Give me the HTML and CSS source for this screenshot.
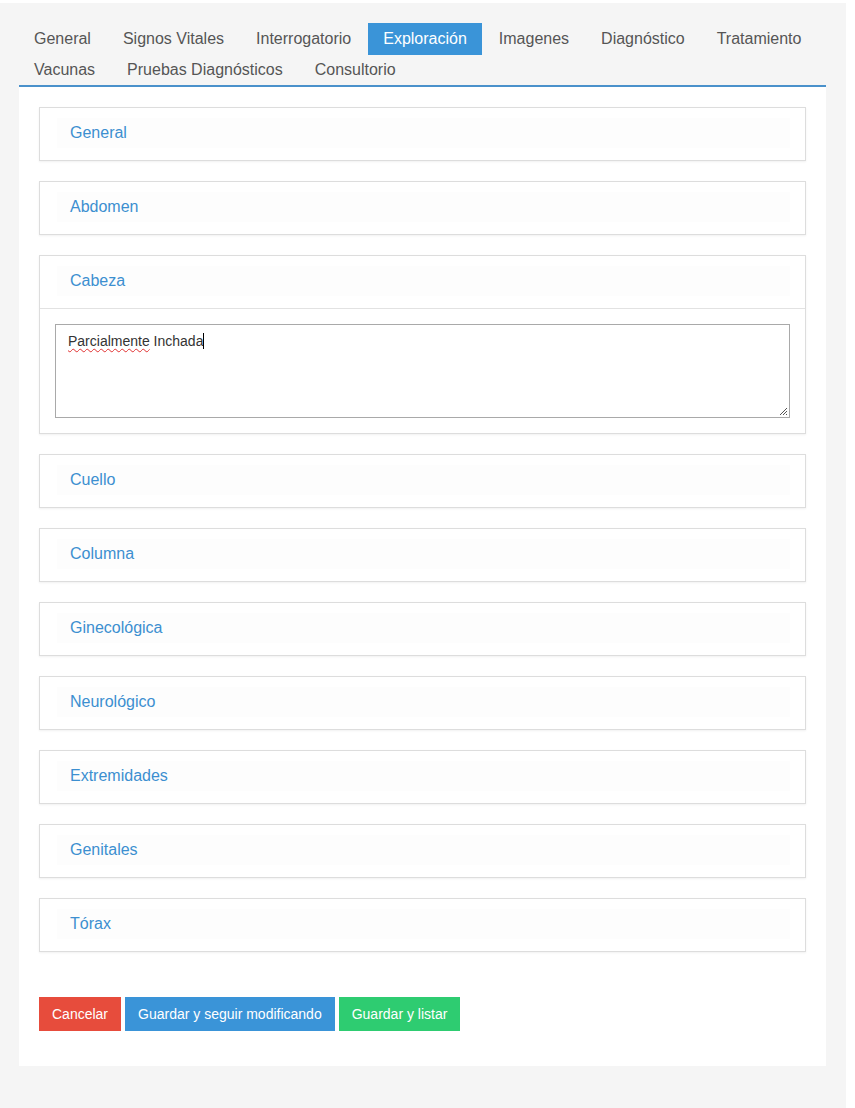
FILE: index.html
```html
<!DOCTYPE html>
<html lang="es">
<head>
<meta charset="utf-8">
<title>Exploración</title>
<link rel="stylesheet" href="styles.css">
</head>
<body>
<div class="page">
  <div class="container">
    <ul class="tabs">
      <li><a class="tab">General</a></li>
      <li><a class="tab">Signos Vitales</a></li>
      <li><a class="tab">Interrogatorio</a></li>
      <li><a class="tab active">Exploración</a></li>
      <li><a class="tab">Imagenes</a></li>
      <li><a class="tab">Diagnóstico</a></li>
      <li><a class="tab">Tratamiento</a></li>
      <li><a class="tab">Vacunas</a></li>
      <li><a class="tab">Pruebas Diagnósticos</a></li>
      <li><a class="tab">Consultorio</a></li>
    </ul>
    <div class="content">
      <div class="item"><div class="item-head"><span class="item-link">General</span></div></div>
      <div class="item"><div class="item-head"><span class="item-link">Abdomen</span></div></div>
      <div class="item">
        <div class="item-head open"><span class="item-link">Cabeza</span></div>
        <div class="item-body">
          <div class="textarea"><span class="spell">Parcialmente</span> Inchada<span class="caret"></span>
            <svg class="grip" width="9" height="9" viewBox="0 0 9 9"><path d="M8 1 L1 8 M8 4 L4 8 M8 7 L7 8" stroke="#555" stroke-width="1"/></svg>
          </div>
        </div>
      </div>
      <div class="item"><div class="item-head"><span class="item-link">Cuello</span></div></div>
      <div class="item"><div class="item-head"><span class="item-link">Columna</span></div></div>
      <div class="item"><div class="item-head"><span class="item-link">Ginecológica</span></div></div>
      <div class="item"><div class="item-head"><span class="item-link">Neurológico</span></div></div>
      <div class="item"><div class="item-head"><span class="item-link">Extremidades</span></div></div>
      <div class="item"><div class="item-head"><span class="item-link">Genitales</span></div></div>
      <div class="item"><div class="item-head"><span class="item-link">Tórax</span></div></div>
      <div class="actions">
        <button class="btn btn-red">Cancelar</button>
        <button class="btn btn-blue">Guardar y seguir modificando</button>
        <button class="btn btn-green">Guardar y listar</button>
      </div>
    </div>
  </div>
</div>
</body>
</html>
```
FILE: styles.css
```css
html, body {
  margin: 0;
  padding: 0;
  background: #ffffff;
}
body {
  font-family: "Liberation Sans", Arial, sans-serif;
  font-size: 14px;
  color: #333;
}
.page {
  width: 846px;
  margin-top: 3px;
  min-height: 1105px;
  background: #f5f5f5;
  padding: 20px 0 0 19px;
  box-sizing: border-box;
}
.container {
  width: 807px;
}
.tabs {
  list-style: none;
  margin: 0;
  padding: 0;
  display: flex;
  flex-wrap: wrap;
  border-bottom: 2px solid #4a91cb;
}
.tabs li {
  margin-right: 2px;
}
.tab {
  display: block;
  padding: 5px 15px;
  line-height: 21px;
  font-size: 16px;
  color: #555;
}
.tab.active {
  background: #3a94d8;
  color: #fff;
  padding-bottom: 6px;
  margin-bottom: -1px;
}
.content {
  background: #fff;
  padding: 20px 20px 35px;
}
.item {
  border: 1px solid #ddd;
  margin-bottom: 20px;
  background: #fff;
  box-shadow: 0 1px 2px rgba(0, 0, 0, 0.06);
}
.item-head {
  height: 52px;
  box-sizing: border-box;
  padding: 10px 15px 12px 17px;
}
.item-head.open {
  border-bottom: 1px solid #e2e2e2;
  height: 53px;
}
.item-link {
  display: block;
  padding: 4px 13px;
  line-height: 22px;
  font-size: 16px;
  color: #3c8fd0;
  background: #fdfdfd;
}
.item-body {
  padding: 15px;
}
.textarea {
  position: relative;
  height: 94px;
  box-sizing: border-box;
  border: 1px solid #a9a9a9;
  padding: 7px 12px;
  font-family: "Liberation Sans", Arial, sans-serif;
  font-size: 14px;
  line-height: 18px;
  color: #333;
  background: #fff;
}
.spell {
  text-decoration: underline wavy #e03030;
  text-decoration-thickness: 1px;
  text-underline-offset: 2px;
}
.caret {
  display: inline-block;
  width: 1px;
  height: 16px;
  background: #000;
  vertical-align: -3px;
}
.grip {
  position: absolute;
  right: 1px;
  bottom: 1px;
}
.actions {
  display: flex;
  gap: 4px;
  padding-top: 25px;
}
.btn {
  border: none;
  font-family: "Liberation Sans", Arial, sans-serif;
  font-size: 14px;
  line-height: 18px;
  padding: 8px 13px;
  color: #fff;
  border-radius: 0;
}
.btn-red { background: #e74c3c; }
.btn-blue { background: #3a94d8; }
.btn-green { background: #2ecc71; }
```
